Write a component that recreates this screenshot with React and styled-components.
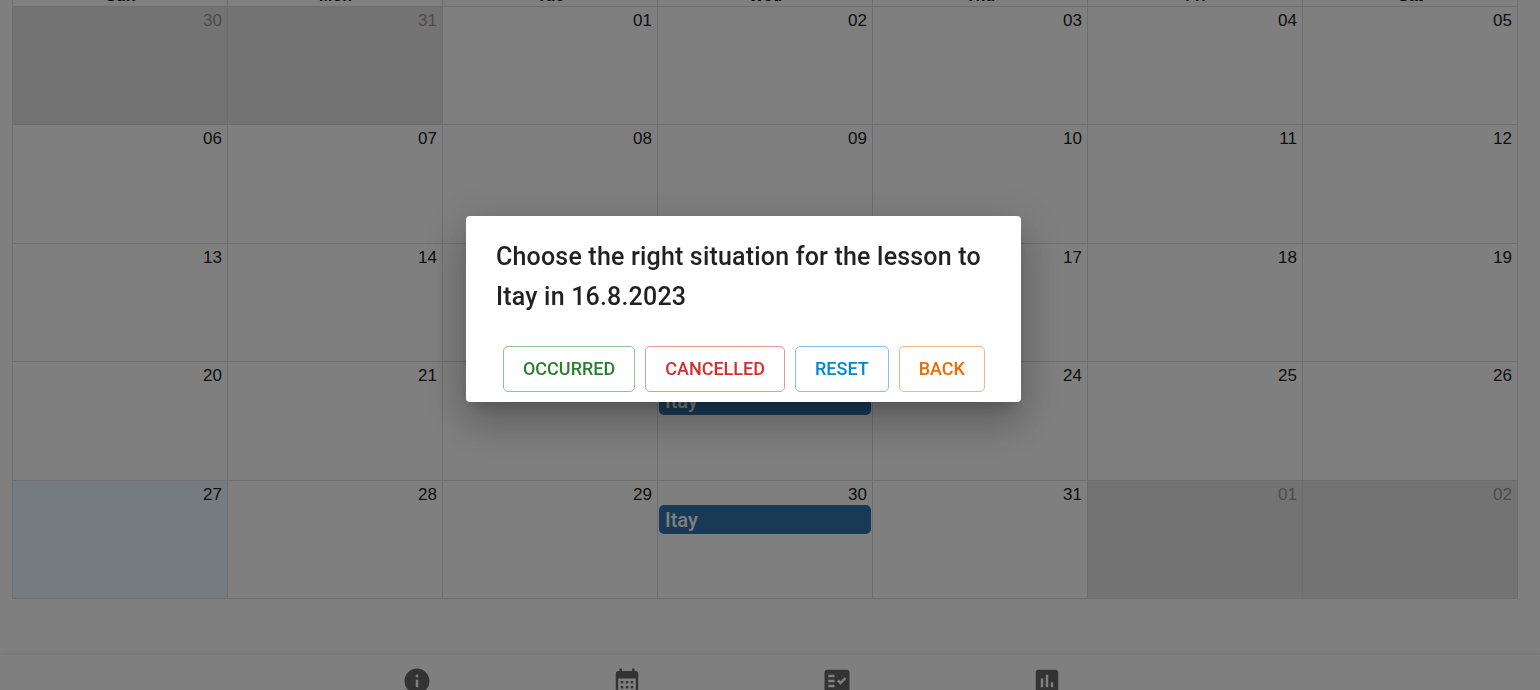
import React from "react";
import styled, { createGlobalStyle } from "styled-components";
import { MdInfo, MdCalendarMonth, MdFactCheck, MdAssessment } from "react-icons/md";

const GlobalStyle = createGlobalStyle`
  * { box-sizing: border-box; }
  body { margin: 0; background: #fff; font-family: "Liberation Sans", Arial, sans-serif; }
`;

const Page = styled.div`
  height: 100vh;
  overflow: hidden;
  display: flex;
  flex-direction: column;
  justify-content: space-between;
`;

const CalendarArea = styled.main`
  padding: 0 22px 0 12px;
`;

const Calendar = styled.table`
  width: 100%;
  height: 613px;
  margin-top: -14px;
  table-layout: fixed;
  border-collapse: collapse;
  font-size: 17px;
  line-height: 20px;
  color: #000;
`;

const DayName = styled.th`
  height: 20px;
  padding: 0 0 2px 1px;
  border: 1px solid #ddd;
  font-size: 16px;
  font-weight: 700;
  line-height: 17px;
`;

const Day = styled.td`
  height: 118px;
  padding: 4px 1px 0;
  vertical-align: top;
  border: 1px solid #ddd;
  background: ${({ $kind }) =>
    $kind === "off" ? "#e6e6e6" : $kind === "today" ? "#eaf6ff" : "#fff"};
  color: ${({ $kind }) => ($kind === "off" ? "#999" : "#222")};
`;

const DayNumber = styled.div`
  padding-right: 4px;
  text-align: right;
`;

const Lesson = styled.button`
  display: block;
  width: 100%;
  height: 29px;
  padding: 1px 6px 0;
  border: 0;
  border-radius: 5px;
  background: #3174ad;
  color: #fff;
  font: 500 20px/28px Roboto, sans-serif;
  text-align: left;
`;

const BottomNav = styled.nav`
  flex: none;
  height: 35px;
  padding: 11px 76px 0 0;
  display: flex;
  justify-content: center;
  gap: 180px;
  background: #fff;
  box-shadow: 0 0 6px rgba(0, 0, 0, 0.12);
`;

const NavLink = styled.a`
  display: block;
  width: 30px;
  height: 30px;
  color: #666;
  svg { display: block; width: 30px; height: 30px; }
`;

const Backdrop = styled.div`
  position: fixed;
  inset: 0;
  padding: 0 53px 72px 0;
  display: flex;
  align-items: center;
  justify-content: center;
  background: rgba(0, 0, 0, 0.5);
`;

const Dialog = styled.section`
  width: 555px;
  border-radius: 4px;
  background: #fff;
  color: rgba(0, 0, 0, 0.87);
  font-family: Roboto, sans-serif;
  box-shadow: 0 11px 15px -7px rgba(0, 0, 0, 0.2),
    0 24px 38px 3px rgba(0, 0, 0, 0.14), 0 9px 46px 8px rgba(0, 0, 0, 0.12);
`;

const DialogTitle = styled.h2`
  margin: 0;
  padding: 21px 30px 29px;
  font-size: 25px;
  font-weight: 500;
  line-height: 40px;
  letter-spacing: 0.0075em;
`;

const Actions = styled.div`
  display: flex;
  justify-content: flex-end;
  gap: 10px;
  padding: 0 36px 10px;
`;

const ActionButton = styled.button`
  height: 46px;
  padding: 0 19px;
  border: 1px solid rgba(${({ $rgb }) => $rgb}, 0.5);
  border-radius: 5px;
  background: transparent;
  color: rgb(${({ $rgb }) => $rgb});
  font: 500 18px/32px Roboto, sans-serif;
  text-transform: uppercase;
`;

const dayNames = ["Sun", "Mon", "Tue", "Wed", "Thu", "Fri", "Sat"];

const weeks = [
  ["30", "31", "01", "02", "03", "04", "05"],
  ["06", "07", "08", "09", "10", "11", "12"],
  ["13", "14", "15", "16", "17", "18", "19"],
  ["20", "21", "22", "23", "24", "25", "26"],
  ["27", "28", "29", "30", "31", "01", "02"],
];

const lessons = { "3-3": "Itay", "4-3": "Itay" };

const actions = [
  { label: "Occurred", rgb: "46, 125, 50" },
  { label: "Cancelled", rgb: "211, 47, 47" },
  { label: "Reset", rgb: "2, 136, 209" },
  { label: "Back", rgb: "237, 108, 2" },
];

const navItems = [
  { id: "info", Icon: MdInfo },
  { id: "calendar", Icon: MdCalendarMonth },
  { id: "lessons", Icon: MdFactCheck },
  { id: "reports", Icon: MdAssessment },
];

function dayKind(week, day) {
  if ((week === 0 && day < 2) || (week === 4 && day > 4)) return "off";
  if (week === 4 && day === 0) return "today";
  return "normal";
}

export default function App() {
  return (
    <>
      <GlobalStyle />
      <Page>
        <CalendarArea>
          <Calendar>
            <thead>
              <tr>
                {dayNames.map((name) => (
                  <DayName key={name} scope="col">{name}</DayName>
                ))}
              </tr>
            </thead>
            <tbody>
              {weeks.map((days, w) => (
                <tr key={w}>
                  {days.map((number, d) => (
                    <Day key={d} $kind={dayKind(w, d)}>
                      <DayNumber>{number}</DayNumber>
                      {lessons[`${w}-${d}`] && (
                        <Lesson type="button">{lessons[`${w}-${d}`]}</Lesson>
                      )}
                    </Day>
                  ))}
                </tr>
              ))}
            </tbody>
          </Calendar>
        </CalendarArea>
        <BottomNav>
          {navItems.map(({ id, Icon }) => (
            <NavLink key={id} href={`#${id}`} aria-label={id}>
              <Icon />
            </NavLink>
          ))}
        </BottomNav>
      </Page>
      <Backdrop>
        <Dialog role="dialog" aria-modal="true" aria-labelledby="situation-title">
          <DialogTitle id="situation-title">
            Choose the right situation for the lesson to Itay in 16.8.2023
          </DialogTitle>
          <Actions>
            {actions.map(({ label, rgb }) => (
              <ActionButton key={label} type="button" $rgb={rgb}>{label}</ActionButton>
            ))}
          </Actions>
        </Dialog>
      </Backdrop>
    </>
  );
}
